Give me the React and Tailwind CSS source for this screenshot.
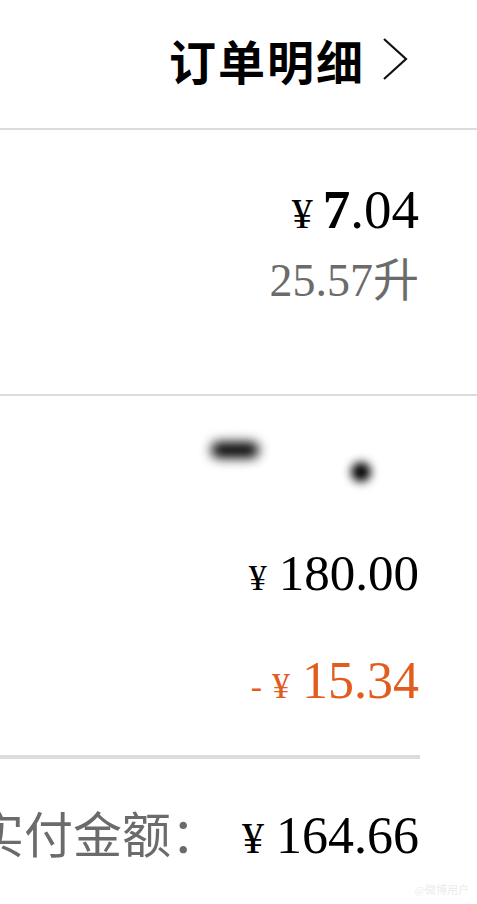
export default function App() {
  const serif = { fontFamily: '"Liberation Serif", "Noto Sans CJK SC", serif' };
  const cjk = { fontFamily: '"Noto Sans CJK SC", sans-serif' };
  return (
    <div className="w-[477px] h-[904px] bg-white overflow-hidden relative" style={serif}>
      {/* header */}
      <div className="h-[130px] flex items-center justify-end pr-[68px] pb-[10px] border-b-2 border-[#dcdcdc]">
        <span className="text-[47px] leading-none font-bold text-black tracking-[2px]" style={cjk}>订单明细</span>
        <svg width="28" height="44" viewBox="0 0 28 44" className="ml-[16px]">
          <polyline points="3,2 25,22 3,42" fill="none" stroke="#111" strokeWidth="2.2" />
        </svg>
      </div>

      {/* fuel */}
      <div className="h-[266px] flex flex-col items-end pr-[58px] pt-[52px] border-b-2 border-[#dcdcdc]">
        <div className="flex items-baseline leading-none text-black">
          <span className="text-[42px] mr-[10px]">¥</span>
          <span className="text-[55px]"><b>7</b>.04</span>
        </div>
        <div className="mt-[16px] flex items-baseline leading-none text-[#6b6b6b]">
          <span className="text-[46px]">25.57</span>
          <span className="text-[46px]" style={cjk}>升</span>
        </div>
      </div>

      {/* amounts */}
      <div className="pr-[58px]">
        <div className="h-[112px] flex justify-end pr-[48px] pt-[38px] gap-[92px]">
          <div className="w-[48px] h-[16px] mt-[8px] bg-black rounded-full blur-[6px]" />
          <div className="w-[20px] h-[20px] mt-[28px] bg-black rounded-full blur-[5px]" />
        </div>
        <div className="flex justify-end items-baseline leading-none text-black mt-[40px]">
          <span className="text-[36px] mr-[12px]">¥</span>
          <span className="text-[51px]">180.00</span>
        </div>
        <div className="flex justify-end items-baseline leading-none text-[#e25c1e] mt-[56px]">
          <span className="text-[34px] mr-[10px]">-</span>
          <span className="text-[36px] mr-[12px]">¥</span>
          <span className="text-[52px]">15.34</span>
        </div>
      </div>

      <div className="mt-[48px] w-[420px] h-[4px] bg-[#dcdcdc]" />

      {/* total */}
      <div className="flex justify-end items-baseline pr-[58px] mt-[48px] leading-none whitespace-nowrap">
        <span className="text-[49px] text-[#6b6b6b] mr-[22px]" style={cjk}>实付金额：</span>
        <span className="text-[44px] text-black mr-[12px]">¥</span>
        <span className="text-[52px] text-black">164.66</span>
      </div>

      <div className="absolute right-[8px] bottom-[6px] text-[11px] text-[#ececec]">@微博用户</div>
    </div>
  );
}
